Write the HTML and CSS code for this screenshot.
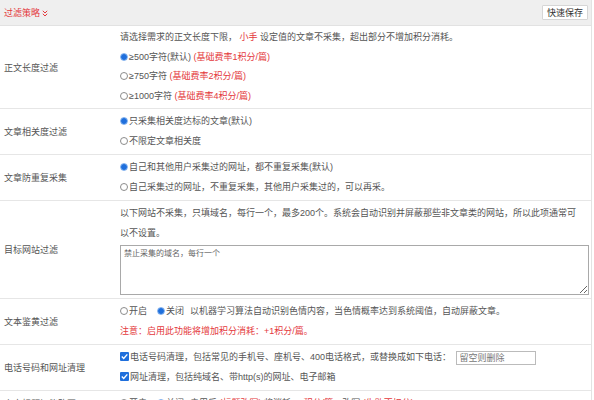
FILE: index.html
```html
<!DOCTYPE html>
<html>
<head>
<meta charset="utf-8">
<link rel="stylesheet" href="styles.css">
</head>
<body>
<div class="panel">
  <div class="head">
    <span class="title">过滤策略 <svg class="chev" width="6" height="7" viewBox="0 0 6 7"><path d="M0.8 0.8 L3 3 L5.2 0.8 M0.8 3.8 L3 6 L5.2 3.8" fill="none" stroke="#e4393c" stroke-width="1"/></svg></span>
    <button class="save">快速保存</button>
  </div>

  <div class="row r1">
    <div class="label">正文长度过滤</div>
    <div class="body">
      <div>请选择需求的正文长度下限， <span class="red">小手</span> 设定值的文章不采集，超出部分不增加积分消耗。</div>
      <div><span class="radio on"></span>≥500字符(默认) <span class="red">(基础费率1积分/篇)</span></div>
      <div><span class="radio"></span>≥750字符 <span class="red">(基础费率2积分/篇)</span></div>
      <div><span class="radio"></span>≥1000字符 <span class="red">(基础费率4积分/篇)</span></div>
    </div>
  </div>

  <div class="row">
    <div class="label">文章相关度过滤</div>
    <div class="body">
      <div><span class="radio on"></span>只采集相关度达标的文章(默认)</div>
      <div><span class="radio"></span>不限定文章相关度</div>
    </div>
  </div>

  <div class="row">
    <div class="label">文章防重复采集</div>
    <div class="body">
      <div><span class="radio on"></span>自己和其他用户采集过的网址，都不重复采集(默认)</div>
      <div><span class="radio"></span>自己采集过的网址，不重复采集，其他用户采集过的，可以再采。</div>
    </div>
  </div>

  <div class="row">
    <div class="label">目标网站过滤</div>
    <div class="body">
      <p class="note">以下网站不采集，只填域名，每行一个，最多200个。系统会自动识别并屏蔽那些非文章类的网站，所以此项通常可以不设置。</p>
      <textarea class="domains" placeholder="禁止采集的域名，每行一个"></textarea>
    </div>
  </div>

  <div class="row">
    <div class="label">文本鉴黄过滤</div>
    <div class="body">
      <div><span class="opt"><span class="radio"></span>开启</span><span class="opt opt2"><span class="radio on"></span>关闭</span>以机器学习算法自动识别色情内容，当色情概率达到系统阈值，自动屏蔽文章。</div>
      <div class="red">注意：启用此功能将增加积分消耗：+1积分/篇。</div>
    </div>
  </div>

  <div class="row">
    <div class="label">电话号码和网址清理</div>
    <div class="body">
      <div><span class="check"><svg width="9" height="9" viewBox="0 0 9 9"><path d="M1.8 4.6 L3.7 6.4 L7.3 2.4" fill="none" stroke="#fff" stroke-width="1.4"/></svg></span>电话号码清理，包括常见的手机号、座机号、400电话格式，或替换成如下电话： <input class="phone" type="text" placeholder="留空则删除"></div>
      <div><span class="check"><svg width="9" height="9" viewBox="0 0 9 9"><path d="M1.8 4.6 L3.7 6.4 L7.3 2.4" fill="none" stroke="#fff" stroke-width="1.4"/></svg></span>网址清理，包括纯域名、带http(s)的网址、电子邮箱</div>
    </div>
  </div>

  <div class="row">
    <div class="label">文章标题智能改写</div>
    <div class="body">
      <div><span class="opt"><span class="radio"></span>开启</span><span class="opt opt2"><span class="radio on"></span>关闭</span>启用后 <span class="red">(标题改写)</span> 将消耗 <span class="red">+1积分/篇</span>，改写 <span class="red">(失败不扣分)</span></div>
    </div>
  </div>
</div>
</body>
</html>
```

FILE: styles.css
```css
* {
  box-sizing: border-box;
}

html,
body {
  margin: 0;
  background: #fff;
}

body {
  font-family: "Liberation Sans", "Noto Sans CJK SC", sans-serif;
  font-size: 9px;
  color: #555;
}

.panel {
  width: 592px;
  border-right: 1px solid #e3e3e3;
}

.head {
  height: 26px;
  display: flex;
  align-items: center;
  justify-content: space-between;
  padding: 0 2px 0 4px;
  background: #efefef;
  border-bottom: 1px solid #e2e2e2;
}

.title {
  color: #e4393c;
  display: flex;
  align-items: center;
  gap: 2px;
}

.chev {
  display: block;
  margin-top: 2px;
}

.save {
  font-family: inherit;
  font-size: 9px;
  color: #333;
  background: #fff;
  border: 1px solid #d6d6d6;
  border-radius: 1px;
  height: 15px;
  width: 46px;
  padding: 0;
  margin-right: 1px;
}

.row {
  display: grid;
  grid-template-columns: 116px 1fr;
  border-bottom: 1px solid #e6e6e6;
}

.label {
  display: flex;
  align-items: center;
  padding-left: 4px;
}

.body {
  padding: 3px 2px 3px 4px;
  line-height: 19.5px;
}

.r1 .body {
  padding: 2px 2px 2px 4px;
}

.red {
  color: #e4393c;
}

.note {
  margin: 0;
  max-width: 462px;
}

.domains {
  display: block;
  width: 469px;
  height: 50px;
  margin: 2px 0 0 0;
  border: 1px solid #a9a9a9;
  padding: 2px 3px;
  font-family: inherit;
  font-size: 8px;
  line-height: 11px;
  color: #555;
}

.domains::placeholder {
  color: #666;
}

.radio {
  display: inline-block;
  width: 8px;
  height: 8px;
  border: 1px solid #8c8c8c;
  border-radius: 50%;
  background: #fff;
  vertical-align: -1px;
  margin-right: 1px;
}

.radio.on {
  border-color: #7fb0ee;
  background: radial-gradient(circle, #1f6fdc 0 2.6px, #4d8fe6 3.2px);
}

.opt {
  margin-right: 10px;
}

.opt2 {
  margin-right: 6px;
}

.check {
  display: inline-block;
  width: 9px;
  height: 9px;
  background: #1f6fdc;
  border-radius: 1px;
  vertical-align: -1px;
  margin-right: 1px;
}

.check svg {
  display: block;
}

.phone {
  width: 80px;
  height: 14px;
  border: 1px solid #bbb;
  padding: 0 3px;
  font-family: inherit;
  font-size: 9px;
  vertical-align: middle;
  margin-left: 2px;
}

.phone::placeholder {
  color: #777;
}
```
